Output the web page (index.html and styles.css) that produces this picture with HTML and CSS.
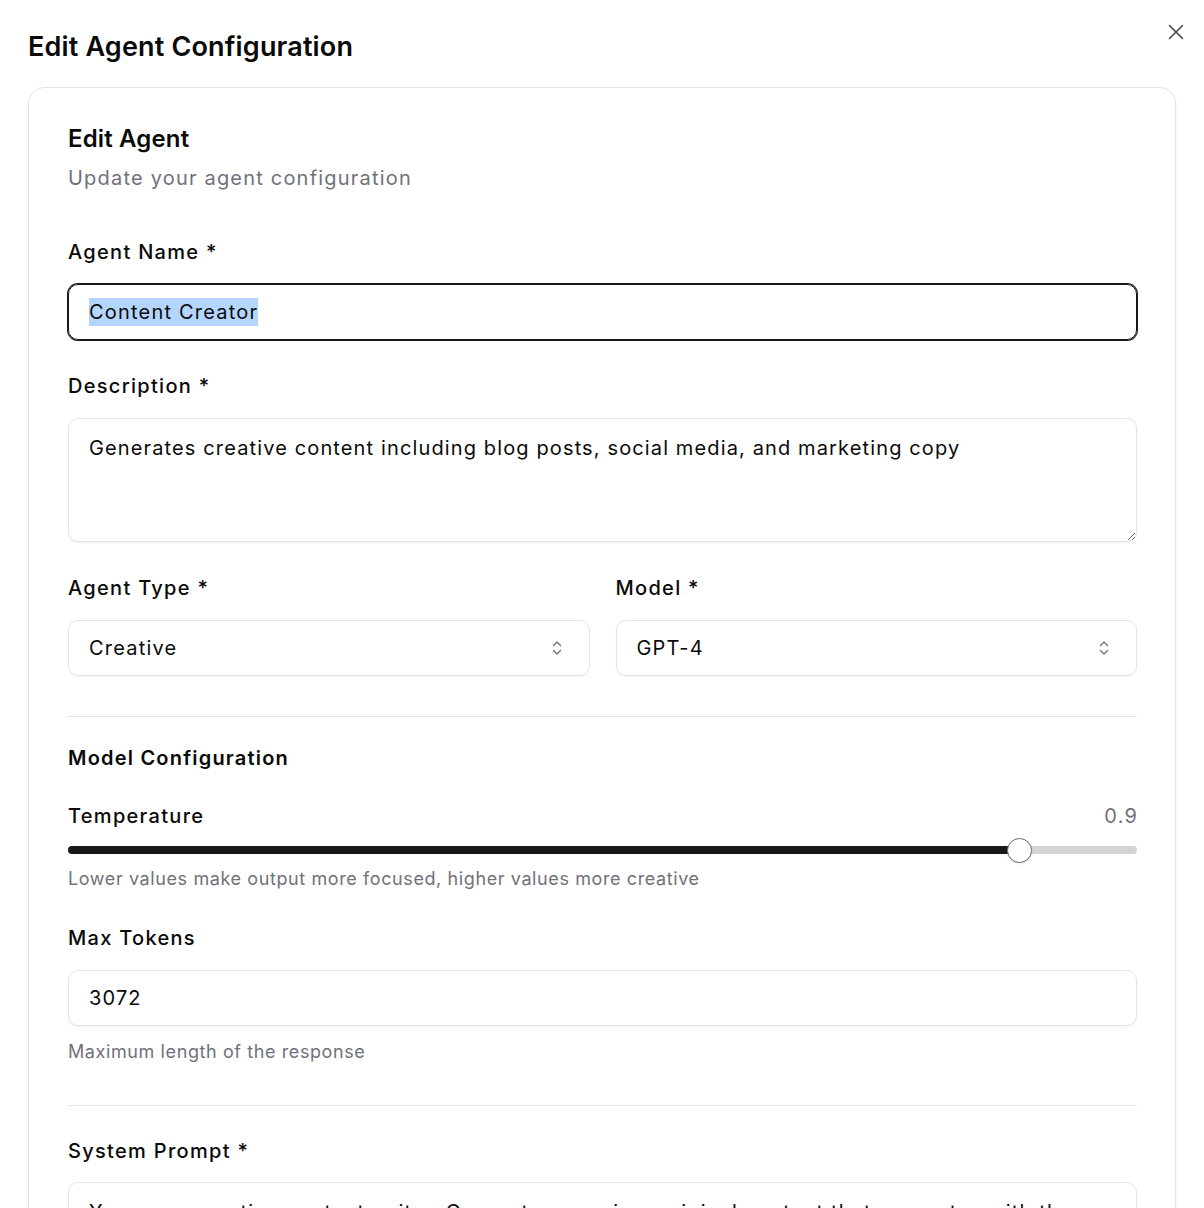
FILE: index.html
```html
<!DOCTYPE html>
<html lang="en">
<head>
<meta charset="utf-8">
<title>Edit Agent Configuration</title>
<link rel="stylesheet" href="styles.css">
</head>
<body>
<div class="dialog">
  <div class="dialog-header">
    <h1 class="dialog-title">Edit Agent Configuration</h1>
    <button class="close-btn" aria-label="Close">
      <svg width="16" height="16" viewBox="0 0 16 16" fill="none" stroke="#3f3f46" stroke-width="1.5" stroke-linecap="round"><path d="M1.5 1.5L14.5 14.5M14.5 1.5L1.5 14.5"/></svg>
    </button>
  </div>
  <div class="card">
    <div class="card-title">Edit Agent</div>
    <div class="card-sub">Update your agent configuration</div>

    <div class="field first">
      <label class="label">Agent Name *</label>
      <div class="input focused"><span class="selected">Content Creator</span></div>
    </div>

    <div class="field">
      <label class="label">Description *</label>
      <textarea class="textarea">Generates creative content including blog posts, social media, and marketing copy</textarea>
    </div>

    <div class="field row">
      <div class="col">
        <label class="label">Agent Type *</label>
        <div class="select"><span>Creative</span>
          <svg width="12" height="18" viewBox="0 0 12 18" fill="none" stroke="#71717a" stroke-width="1.4" stroke-linecap="round" stroke-linejoin="round"><path d="M2.5 6.5L6 3L9.5 6.5M2.5 11.5L6 15L9.5 11.5"/></svg>
        </div>
      </div>
      <div class="col">
        <label class="label">Model *</label>
        <div class="select"><span>GPT-4</span>
          <svg width="12" height="18" viewBox="0 0 12 18" fill="none" stroke="#71717a" stroke-width="1.4" stroke-linecap="round" stroke-linejoin="round"><path d="M2.5 6.5L6 3L9.5 6.5M2.5 11.5L6 15L9.5 11.5"/></svg>
        </div>
      </div>
    </div>

    <hr class="sep sep1">

    <div class="section-title">Model Configuration</div>

    <div class="temp-head">
      <span class="label">Temperature</span>
      <span class="value">0.9</span>
    </div>
    <div class="slider">
      <div class="slider-fill" style="width:89%"></div>
      <div class="slider-thumb" style="left:89%"></div>
    </div>
    <div class="help">Lower values make output more focused, higher values more creative</div>

    <div class="field tokens">
      <label class="label">Max Tokens</label>
      <div class="input">3072</div>
      <div class="help help2">Maximum length of the response</div>
    </div>

    <hr class="sep sep2">

    <div class="field prompt">
      <label class="label">System Prompt *</label>
      <textarea class="textarea tall">You are a creative content writer. Generate engaging, original content that resonates with the target audience.</textarea>
    </div>
  </div>
</div>
</body>
</html>
```

FILE: styles.css
```css
* { box-sizing: border-box; }
html, body { margin: 0; padding: 0; background: #fff; }
body {
  font-family: Inter, "Noto Sans", "Liberation Sans", sans-serif;
  color: #0a0a0a;
  overflow: hidden;
  height: 1208px;
  letter-spacing: 1.15px;
}
.dialog { padding: 29px 28px 0 28px; }
.dialog-header { display: flex; align-items: flex-start; justify-content: space-between; position: relative; }
.dialog-title {
  margin: 0;
  font-size: 27px;
  line-height: 36px;
  font-weight: 600;
  letter-spacing: 0.17px;
}
.close-btn {
  position: absolute;
  right: -8px;
  top: -5px;
  border: 0;
  background: transparent;
  padding: 0;
  width: 16px;
  height: 16px;
  display: flex;
}
.card {
  margin-top: 22px;
  border: 1px solid #e4e4e7;
  border-radius: 16px;
  box-shadow: 0 1px 3px rgba(0,0,0,0.06);
  padding: 35px 38px 0 39px;
  height: 1200px;
}
.card-title { font-size: 24px; line-height: 32px; font-weight: 600; letter-spacing: 0.15px; }
.card-sub { margin-top: 9px; font-size: 20px; line-height: 28px; color: #71717a; letter-spacing: 1.2px; }
.field { display: flex; flex-direction: column; margin-top: 32px; }
.field.first { margin-top: 46px; }
.label { font-size: 20px; line-height: 28px; font-weight: 500; display: block; letter-spacing: 1.3px; }
.field > .label, .col > .label { margin-bottom: 18px; }
.input {
  height: 56px;
  border: 1px solid #e4e4e7;
  border-radius: 10px;
  padding: 0 20px;
  font-size: 20px;
  display: flex;
  align-items: center;
  box-shadow: 0 1px 2px rgba(0,0,0,0.05);
}
.input.focused {
  border-color: #18181b;
  box-shadow: 0 0 0 1px #18181b;
  border-radius: 10px;
  letter-spacing: 1.2px;
}
.selected { background: #b4d5fe; line-height: 28px; }
.textarea {
  display: block;
  width: 100%;
  height: 124px;
  border: 1px solid #e4e4e7;
  border-radius: 10px;
  padding: 15px 20px;
  font-family: inherit;
  font-size: 20px;
  line-height: 28px;
  letter-spacing: 1.13px;
  color: #0a0a0a;
  resize: vertical;
  box-shadow: 0 1px 2px rgba(0,0,0,0.05);
  outline: none;
  margin: 0;
}
.row { flex-direction: row; gap: 26px; }
.col { flex: 1; display: flex; flex-direction: column; }
.select {
  height: 56px;
  border: 1px solid #e4e4e7;
  border-radius: 10px;
  padding: 0 26px 0 20px;
  font-size: 20px;
  display: flex;
  align-items: center;
  justify-content: space-between;
  box-shadow: 0 1px 2px rgba(0,0,0,0.05);
}
.select span { letter-spacing: 1.2px; }
.sep { border: 0; border-top: 1px solid #e4e4e7; margin: 0; }
.sep1 { margin-top: 40px; }
.section-title { margin-top: 27px; font-size: 20px; line-height: 28px; font-weight: 600; letter-spacing: 1.2px; }
.temp-head { margin-top: 30px; display: flex; justify-content: space-between; align-items: center; }
.value { font-size: 20px; line-height: 28px; color: #71717a; letter-spacing: 1.3px; margin-right: -1.3px; }
.slider {
  position: relative;
  margin-top: 16px;
  height: 8px;
  border-radius: 4px;
  background: #d4d4d8;
}
.slider-fill { height: 100%; background: #18181b; border-radius: 4px; }
.slider-thumb {
  position: absolute;
  top: 50%;
  width: 25px;
  height: 25px;
  margin-left: -12.5px;
  margin-top: -12.5px;
  border-radius: 50%;
  background: #fff;
  border: 1.5px solid #6b6b70;
  box-shadow: 0 1px 2px rgba(0,0,0,0.1);
}
.help { margin-top: 13px; font-size: 18px; line-height: 24px; color: #71717a; letter-spacing: 0.6px; }
.field.tokens { margin-top: 33px; }
.help2 { margin-top: 14px; }
.sep2 { margin-top: 41px; }
.field.prompt { margin-top: 31px; }
.field.prompt > .label { margin-bottom: 17px; }
.textarea.tall { height: 160px; }
```
